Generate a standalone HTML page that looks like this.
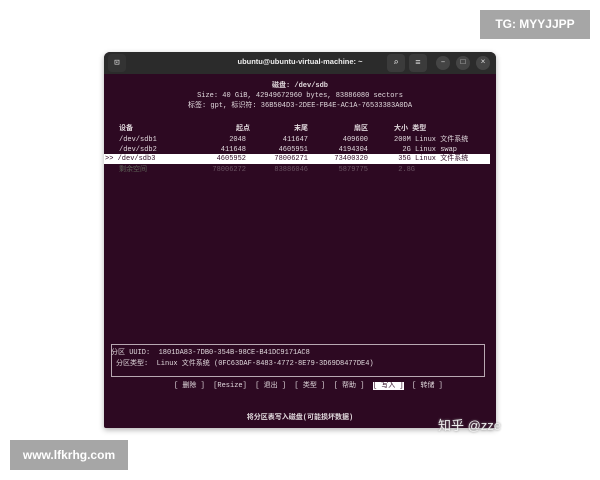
<!DOCTYPE html>
<html><head><meta charset="utf-8"><style>
body{margin:0;width:600px;height:480px;background:#fff;position:relative;overflow:hidden;font-family:"Liberation Mono","Noto Sans CJK SC",monospace}
.abs{position:absolute;white-space:nowrap}
.win{position:absolute;left:104px;top:52px;width:392px;height:376px;background:#2d0922;border-radius:6px 6px 2px 2px;overflow:hidden;box-shadow:0 2px 6px rgba(0,0,0,.3)}
.tb{position:absolute;left:0;top:0;width:392px;height:22px;background:#2b2b2b}
.t{position:absolute;font-size:7px;color:#e0d8dc;white-space:nowrap;line-height:9px}
.r{text-align:right}
.btn{position:absolute;top:4px;width:14px;height:14px;border-radius:7px;background:#444;color:#ddd;font-size:8px;text-align:center;line-height:14px}
.sq{position:absolute;top:2px;width:18px;height:18px;border-radius:4px;background:#3b3b3b;color:#ddd;font-size:9px;text-align:center;line-height:18px}
.gray{position:absolute;background:#a6a6a6;color:#fff;font-family:"Liberation Sans",sans-serif;font-weight:bold}
.c{position:absolute;left:0;top:3px;width:392px;height:373px}
</style></head><body>
<div class="gray" style="left:480px;top:10px;width:110px;height:29px;font-size:12px;line-height:29px;text-align:center">TG: MYYJJPP</div>
<div class="gray" style="left:10px;top:440px;width:118px;height:30px;font-size:12px;line-height:30px;text-align:center">www.lfkrhg.com</div>
<div class="win">
 <div class="tb">
  <div class="sq" style="left:4px;background:#333">⊡</div>
  <div class="abs" style="left:0;width:392px;top:5px;text-align:center;color:#eee;font-family:'Liberation Sans',sans-serif;font-weight:bold;font-size:7.5px">ubuntu@ubuntu-virtual-machine: ~</div>
  <div class="sq" style="left:283px">⌕</div>
  <div class="sq" style="left:305px">≡</div>
  <div class="btn" style="left:332px">–</div>
  <div class="btn" style="left:352px">□</div>
  <div class="btn" style="left:372px">×</div>
 </div>
 <div class="c">
 <div class="t" style="left:0;width:392px;text-align:center;top:27px;font-weight:bold">磁盘: /dev/sdb</div>
 <div class="t" style="left:0;width:392px;text-align:center;top:37px">Size: 40 GiB, 42949672960 bytes, 83886080 sectors</div>
 <div class="t" style="left:0;width:392px;text-align:center;top:47px">标签: gpt, 标识符: 36B504D3-2DEE-FB4E-AC1A-76533383A0DA</div>
 <div class="t" style="left:15px;top:70px;font-weight:bold">设备</div>
 <div class="t r" style="left:100px;width:46px;top:70px;font-weight:bold">起点</div>
 <div class="t r" style="left:150px;width:54px;top:70px;font-weight:bold">末尾</div>
 <div class="t r" style="left:210px;width:54px;top:70px;font-weight:bold">扇区</div>
 <div class="t" style="left:290px;top:70px;font-weight:bold">大小 类型</div>
 <div style="position:absolute;left:0;top:99px;width:386px;height:10px;background:#fff"></div>
 <div class="t" style="left:15px;top:81px">/dev/sdb1</div><div class="t r" style="left:100px;width:42px;top:81px">2048</div><div class="t r" style="left:150px;width:54px;top:81px">411647</div><div class="t r" style="left:210px;width:54px;top:81px">409600</div><div class="t" style="left:290px;top:81px">200M Linux 文件系统</div>
 <div class="t" style="left:15px;top:91px">/dev/sdb2</div><div class="t r" style="left:100px;width:42px;top:91px">411648</div><div class="t r" style="left:150px;width:54px;top:91px">4605951</div><div class="t r" style="left:210px;width:54px;top:91px">4194304</div><div class="t" style="left:290px;top:91px">&nbsp;&nbsp;2G Linux swap</div>
 <div class="t" style="left:1px;top:100px;color:#2d0922">&gt;&gt; /dev/sdb3</div><div class="t r" style="left:100px;width:42px;top:100px;color:#2d0922">4605952</div><div class="t r" style="left:150px;width:54px;top:100px;color:#2d0922">78006271</div><div class="t r" style="left:210px;width:54px;top:100px;color:#2d0922">73400320</div><div class="t" style="left:290px;top:100px;color:#2d0922">&nbsp;35G Linux 文件系统</div>
 <div class="t" style="left:15px;top:111px;color:#5e6458">剩余空间</div><div class="t r" style="left:100px;width:42px;top:111px;color:#6a5262">78006272</div><div class="t r" style="left:150px;width:54px;top:111px;color:#6a5262">83886046</div><div class="t r" style="left:210px;width:54px;top:111px;color:#6a5262">5879775</div><div class="t" style="left:290px;top:111px;color:#6a5262">&nbsp;2.8G</div>
 <div style="position:absolute;left:7px;top:289px;width:372px;height:31px;border:1px solid #b8a8b2"></div>
 <div class="t" style="left:7px;top:294px">分区 UUID:&nbsp; 1801DA83-7DB0-354B-98CE-B41DC9171AC8</div>
 <div class="t" style="left:12px;top:305px">分区类型:&nbsp; Linux 文件系统 (0FC63DAF-8483-4772-8E79-3D69D8477DE4)</div>
 <div class="t" style="left:70px;top:327px">[ 删除 ]&nbsp; [Resize]&nbsp; [ 退出 ]&nbsp; [ 类型 ]&nbsp; [ 帮助 ]&nbsp; <span style="background:#fff;color:#2d0922">[ 写入 ]</span>&nbsp; [ 转储 ]</div>
 <div class="t" style="left:0;width:392px;text-align:center;top:359px;font-weight:bold">将分区表写入磁盘(可能损坏数据)</div>
 </div>
</div>
<div class="abs" style="left:438px;top:415px;color:#eee;font-family:'Liberation Sans','Noto Sans CJK SC',sans-serif;font-size:13px;text-shadow:0 0 2px #888">知乎 @zze</div>
</body></html>
